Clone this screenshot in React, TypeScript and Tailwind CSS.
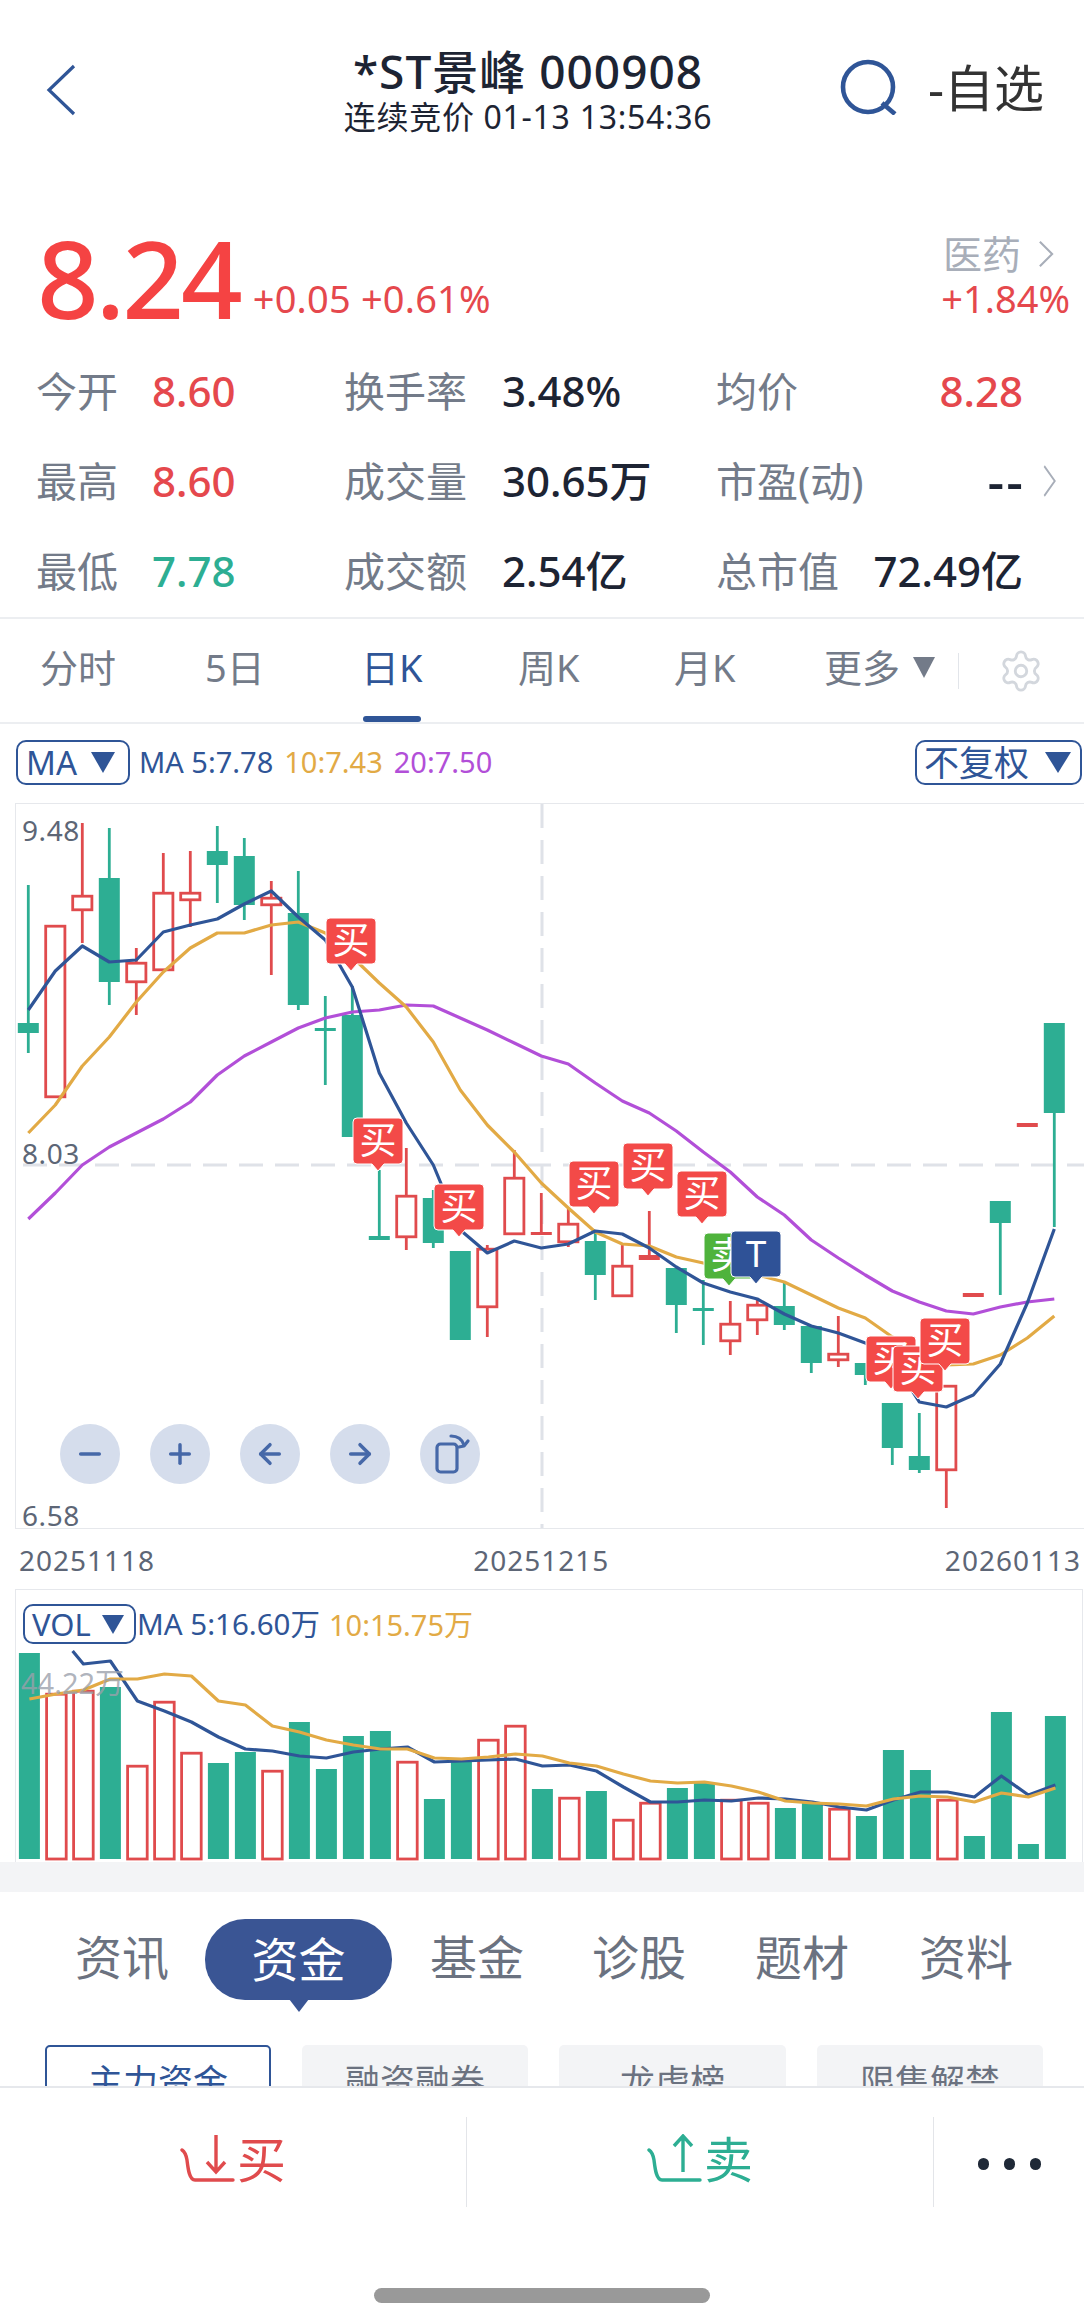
import { ArrowLeft, ArrowRight, Minus, Plus, Settings } from 'lucide-react';

type Candle = [up: boolean, wickTop: number, wickBottom: number, bodyTop: number, bodyBottom: number];

// page y coordinates, the chart svg uses a viewBox in page pixels
const candles: Candle[] = [
  [false, 885, 1053, 1023, 1033],
  [true, 925, 1098, 925, 1098],
  [true, 823, 943, 895, 911],
  [false, 828, 1005, 878, 982],
  [true, 948, 1015, 962, 983],
  [true, 853, 971, 892, 971],
  [true, 851, 927, 892, 901],
  [false, 826, 903, 851, 865],
  [false, 838, 920, 856, 905],
  [true, 881, 975, 897, 906],
  [false, 871, 1010, 913, 1005],
  [false, 996, 1085, 1028, 1031],
  [false, 986, 1137, 1015, 1137],
  [false, 1170, 1240, 1236, 1240],
  [true, 1148, 1250, 1195, 1238],
  [false, 1190, 1248, 1198, 1243],
  [false, 1251, 1340, 1251, 1340],
  [true, 1245, 1337, 1248, 1308],
  [true, 1150, 1235, 1177, 1235],
  [true, 1193, 1235, 1232, 1235],
  [true, 1209, 1247, 1223, 1243],
  [false, 1230, 1300, 1241, 1275],
  [true, 1245, 1297, 1265, 1297],
  [true, 1211, 1260, 1255, 1260],
  [false, 1268, 1333, 1268, 1305],
  [false, 1280, 1345, 1308, 1311],
  [true, 1301, 1355, 1323, 1342],
  [true, 1300, 1335, 1304, 1321],
  [false, 1283, 1330, 1306, 1325],
  [false, 1326, 1373, 1326, 1363],
  [true, 1316, 1367, 1353, 1361],
  [false, 1363, 1385, 1363, 1375],
  [false, 1403, 1465, 1403, 1448],
  [false, 1413, 1473, 1456, 1470],
  [true, 1385, 1508, 1385, 1471],
  [true, 1293, 1297, 1293, 1297],
  [false, 1201, 1295, 1201, 1223],
  [true, 1123, 1127, 1123, 1127],
  [false, 1023, 1227, 1023, 1113],
];

const ma5 = [1010, 971, 946, 962, 960, 932, 925, 919, 904, 891, 917, 940, 987, 1073, 1123, 1165, 1230, 1253, 1241, 1248, 1244, 1231, 1234, 1248, 1267, 1283, 1292, 1299, 1314, 1326, 1333, 1343, 1360, 1402, 1407, 1395, 1364, 1303, 1229];
const ma10 = [1133, 1105, 1066, 1037, 1002, 972, 948, 933, 933, 925, 922, 933, 957, 983, 1007, 1042, 1090, 1125, 1152, 1183, 1208, 1232, 1244, 1246, 1257, 1263, 1272, 1275, 1282, 1295, 1308, 1318, 1337, 1353, 1365, 1364, 1355, 1338, 1316];
const ma20 = [1219, 1193, 1165, 1147, 1133, 1119, 1102, 1075, 1056, 1042, 1028, 1018, 1012, 1010, 1005, 1006, 1018, 1030, 1043, 1056, 1064, 1083, 1101, 1113, 1131, 1152, 1172, 1197, 1215, 1240, 1258, 1275, 1291, 1302, 1311, 1314, 1307, 1302, 1299];

const flags = [
  { x: 326, y: 918, text: '买', color: '#f34a48' },
  { x: 353, y: 1118, text: '买', color: '#f34a48' },
  { x: 434, y: 1184, text: '买', color: '#f34a48' },
  { x: 569, y: 1161, text: '买', color: '#f34a48' },
  { x: 623, y: 1143, text: '买', color: '#f34a48' },
  { x: 677, y: 1171, text: '买', color: '#f34a48' },
  { x: 704, y: 1233, text: '卖', color: '#4fb33c' },
  { x: 731, y: 1231, text: 'T', color: '#2f5297' },
  { x: 866, y: 1336, text: '买', color: '#f34a48' },
  { x: 893, y: 1346, text: '买', color: '#f34a48' },
  { x: 920, y: 1318, text: '买', color: '#f34a48' },
];

// [up, top]
const volumes: [boolean, number][] = [
  [false, 1653], [true, 1693], [true, 1690], [false, 1687], [true, 1765], [true, 1701], [true, 1752], [false, 1763],
  [false, 1752], [true, 1770], [false, 1722], [false, 1769], [false, 1736], [false, 1731], [true, 1761], [false, 1799],
  [false, 1760], [true, 1739], [true, 1725], [false, 1789], [true, 1797], [false, 1791], [true, 1819], [true, 1802],
  [false, 1788], [false, 1783], [true, 1799], [true, 1802], [false, 1808], [false, 1803], [true, 1808], [false, 1816],
  [false, 1750], [false, 1770], [true, 1799], [false, 1836], [false, 1712], [false, 1844], [false, 1716],
];

const volMa5 = [1664, 1661, 1701, 1711, 1722, 1737, 1749, 1751, 1756, 1758, 1752, 1749, 1747, 1762, 1761, 1760, 1759, 1766, 1765, 1771, 1787, 1802, 1802, 1800, 1801, 1798, 1799, 1802, 1807, 1810, 1800, 1792, 1792, 1797, 1776, 1795, 1785];
const volMa10 = [1699, 1694, 1690, 1679, 1679, 1674, 1676, 1701, 1705, 1726, 1732, 1740, 1745, 1749, 1749, 1758, 1759, 1757, 1754, 1756, 1763, 1766, 1774, 1781, 1783, 1782, 1786, 1792, 1801, 1803, 1804, 1806, 1799, 1796, 1797, 1802, 1793, 1797, 1788];

const GREEN = '#2dae93';
const RED = '#e04b4d';
const BLUE = '#2f5597';
const ORANGE = '#e2aa45';
const PURPLE = '#b24fd8';

const candleX = (i: number) => 28.3 + 27 * i;
const volX = (i: number) => 29.4 + 27 * i;

function toPoints(values: number[], getX: (i: number) => number, from = 0) {
  return values.map((y, i) => `${getX(i + from)},${y}`).join(' ');
}

function Caret({ color, className }: { color: string; className: string }) {
  return (
    <svg viewBox="0 0 24 24" className={className} preserveAspectRatio="none">
      <polygon points="0,0 24,0 12,24" fill={color} />
    </svg>
  );
}

function Stat({ label, value, valueClass, labelWidth }: { label: string; value: string; valueClass: string; labelWidth: string }) {
  return (
    <div className="flex items-center">
      <span className={`${labelWidth} text-[41px] leading-none text-[#737b89]`}>{label}</span>
      <span className={`text-[42px] leading-none font-medium ${valueClass}`}>{value}</span>
    </div>
  );
}

function KlineChart() {
  return (
    <div className="relative ml-[15px] h-[726px] border border-r-0 border-[#e6e8ec]">
      <svg viewBox="15 803 1069 726" className="absolute -left-px -top-px h-[726px] w-[1069px]">
        <line x1="23" y1="1165" x2="1084" y2="1165" stroke="#dfe2e8" strokeWidth="3" strokeDasharray="24 12" />
        <line x1="542" y1="804" x2="542" y2="1528" stroke="#dfe2e8" strokeWidth="3" strokeDasharray="24 12" />
        {candles.map(([up, wickTop, wickBottom, bodyTop, bodyBottom], i) => {
          const x = candleX(i);
          const color = up ? RED : GREEN;
          const thin = bodyBottom - bodyTop < 7;
          return (
            <g key={i}>
              <line x1={x} y1={wickTop} x2={x} y2={wickBottom} stroke={color} strokeWidth="2.8" />
              {up && !thin ? (
                <rect x={x - 9.6} y={bodyTop + 1.2} width="19.2" height={bodyBottom - bodyTop - 2.4} fill="#fff" stroke={color} strokeWidth="2.8" />
              ) : (
                <rect x={x - 10.5} y={bodyTop} width="21" height={bodyBottom - bodyTop} fill={color} />
              )}
            </g>
          );
        })}
        <polyline points={toPoints(ma20, candleX)} fill="none" stroke={PURPLE} strokeWidth="3.2" strokeLinejoin="round" />
        <polyline points={toPoints(ma10, candleX)} fill="none" stroke={ORANGE} strokeWidth="3.2" strokeLinejoin="round" />
        <polyline points={toPoints(ma5, candleX)} fill="none" stroke={BLUE} strokeWidth="3.2" strokeLinejoin="round" />
        {flags.map((flag) => (
          <g key={`${flag.x}-${flag.y}`}>
            <path
              d={`M${flag.x + 4} ${flag.y}h42a4 4 0 0 1 4 4v38a4 4 0 0 1-4 4h-15l-6 7-6-7h-15a4 4 0 0 1-4-4v-38a4 4 0 0 1 4-4z`}
              fill={flag.color}
              stroke="#fff"
              strokeWidth="1"
            />
            <text x={flag.x + 25} y={flag.y + 36} textAnchor="middle" fill="#fff" fontSize="37">
              {flag.text}
            </text>
          </g>
        ))}
      </svg>
      <span className="absolute left-[6px] top-[10px] text-[28px] leading-[32px] tracking-[0.6px] text-[#5d6676]">9.48</span>
      <span className="absolute left-[6px] top-[333px] text-[28px] leading-[32px] tracking-[0.6px] text-[#5d6676]">8.03</span>
      <span className="absolute left-[6px] top-[695px] text-[28px] leading-[32px] tracking-[0.6px] text-[#5d6676]">6.58</span>
      <div className="absolute left-[44px] top-[620px] flex gap-[30px] text-[#4668a8]">
        <div className="flex h-[60px] w-[60px] items-center justify-center rounded-full bg-[#d5ddec]">
          <Minus size={32} strokeWidth={2.6} />
        </div>
        <div className="flex h-[60px] w-[60px] items-center justify-center rounded-full bg-[#d5ddec]">
          <Plus size={32} strokeWidth={2.6} />
        </div>
        <div className="flex h-[60px] w-[60px] items-center justify-center rounded-full bg-[#d5ddec]">
          <ArrowLeft size={32} strokeWidth={2.6} />
        </div>
        <div className="flex h-[60px] w-[60px] items-center justify-center rounded-full bg-[#d5ddec]">
          <ArrowRight size={32} strokeWidth={2.6} />
        </div>
        <div className="flex h-[60px] w-[60px] items-center justify-center rounded-full bg-[#d5ddec]">
          <svg viewBox="0 0 60 60" className="h-[60px] w-[60px]" fill="none" stroke="currentColor" strokeWidth="3.2">
            <rect x="17" y="20" width="20" height="28" rx="3.5" />
            <path d="M31 12c6 0 11 3 13 9" strokeLinecap="round" />
            <path d="M39 23l5 -1 4 -5" strokeLinecap="round" strokeLinejoin="round" />
          </svg>
        </div>
      </div>
    </div>
  );
}

function VolumeChart() {
  return (
    <div className="relative ml-[15px] mr-[1px] h-[273px] border-x border-t border-[#e6e8ec]">
      <svg viewBox="15 1589 1068 273" className="absolute -left-px -top-px h-[273px] w-[1068px]">
        {volumes.map(([up, top], i) => {
          const x = volX(i);
          return up ? (
            <rect key={i} x={x - 9.8} y={top + 1.2} width="19.6" height={1859 - top - 1.2} fill="#fff" stroke={RED} strokeWidth="2.8" />
          ) : (
            <rect key={i} x={x - 10.5} y={top} width="21" height={1859 - top} fill={GREEN} />
          );
        })}
        <polyline points={`72.6,1651 ${toPoints(volMa5, volX, 2)}`} fill="none" stroke={BLUE} strokeWidth="3.2" strokeLinejoin="round" />
        <polyline points={toPoints(volMa10, volX)} fill="none" stroke={ORANGE} strokeWidth="3.2" strokeLinejoin="round" />
      </svg>
      <span className="absolute left-[5px] top-[77px] text-[29px] leading-[32px] text-[#9aa0ab]/80">44.22万</span>
      <div className="absolute left-[7px] top-[14px] flex items-center">
        <div className="flex h-[40px] w-[113px] items-center rounded-[10px] border-2 border-[#2f5597] pl-[7px] text-[31px] leading-none text-[#2f5597]">
          VOL
          <Caret color={BLUE} className="ml-[11px] h-[19px] w-[22px]" />
        </div>
        <span className="ml-[1px] text-[29.5px] leading-none text-[#2f5597]">MA 5:16.60万</span>
        <span className="ml-[9px] text-[29px] leading-none text-[#e2aa45]">10:15.75万</span>
      </div>
    </div>
  );
}

export default function App() {
  return (
    <div className="relative flex h-[2321px] w-[1084px] flex-col overflow-hidden bg-white font-['Noto_Sans','Noto_Sans_CJK_SC',sans-serif]">
      <header className="flex h-[140px] shrink-0">
        <svg viewBox="0 0 30 52" className="ml-[46px] mt-[64px] h-[52px] w-[30px]" fill="none" stroke="#2f5597" strokeWidth="3.2">
          <path d="M28 2 3 26l25 24" />
        </svg>
        <div className="ml-[268px] w-[368px] pt-[45px] text-center">
          <div className="-mx-[10px] text-[46px] leading-[52px] font-medium tracking-[1px] whitespace-nowrap text-[#1d2433]">*ST景峰 000908</div>
          <div className="-mx-[10px] text-[32px] leading-[40px] tracking-[0.7px] whitespace-nowrap text-[#1d2433]">连续竞价 01-13 13:54:36</div>
        </div>
        <svg viewBox="0 0 58 56" className="ml-[128px] mt-[59px] h-[56px] w-[58px]" fill="none" stroke="#2f5597" strokeWidth="4.6">
          <circle cx="28" cy="28" r="25" />
          <path d="M42 44l13 11" />
        </svg>
        <div className="ml-[30px] mt-[63px] h-[50px] text-[50px] leading-[50px] whitespace-nowrap text-[#333]">-自选</div>
      </header>

      <section className="relative flex h-[207px] shrink-0 pl-[37px]">
        <div className="mt-[78px] text-[108px] leading-[120px] font-medium tracking-[-3px] text-[#f54343]">8.24</div>
        <div className="ml-[13px] mt-[133px] text-[38px] leading-[50px] tracking-[0.2px] whitespace-nowrap text-[#e5484d]">+0.05 +0.61%</div>
        <div className="ml-auto mr-[14px] mt-[89px] flex flex-col items-end">
          <div className="flex items-center text-[39px] leading-[50px] text-[#a8aeb9]">
            医药
            <svg viewBox="0 0 20 32" className="ml-[16px] mr-[15px] h-[28px] w-[18px]" fill="none" stroke="#a8aeb9" strokeWidth="2.4">
              <path d="M3 2l14 14-14 14" />
            </svg>
          </div>
          <div className="-mt-[6px] text-[38px] leading-[50px] whitespace-nowrap text-[#e5484d]">+1.84%</div>
        </div>
      </section>

      <section className="flex h-[270px] shrink-0 flex-col pl-[36px]">
        <div className="flex h-[90px] -translate-y-[1px] items-center">
          <div className="w-[308px]">
            <Stat label="今开" value="8.60" valueClass="text-[#e5484d]" labelWidth="w-[116px]" />
          </div>
          <div className="w-[372px]">
            <Stat label="换手率" value="3.48%" valueClass="text-[#1d2433]" labelWidth="w-[158px]" />
          </div>
          <div className="flex w-[307px] items-center justify-between">
            <span className="text-[41px] leading-none text-[#737b89]">均价</span>
            <span className="text-[42px] leading-none font-medium text-[#e5484d]">8.28</span>
          </div>
        </div>
        <div className="flex h-[90px] -translate-y-[1px] items-center">
          <div className="w-[308px]">
            <Stat label="最高" value="8.60" valueClass="text-[#e5484d]" labelWidth="w-[116px]" />
          </div>
          <div className="w-[372px]">
            <Stat label="成交量" value="30.65万" valueClass="text-[#1d2433]" labelWidth="w-[158px]" />
          </div>
          <div className="flex w-[307px] items-center justify-between">
            <span className="text-[41px] leading-none text-[#737b89]">市盈(动)</span>
            <span className="-mr-[2px] text-[52px] leading-none font-medium tracking-[2px] text-[#1d2433]">--</span>
          </div>
          <svg viewBox="0 0 20 32" className="ml-[19px] h-[34px] w-[15px]" fill="none" stroke="#a8aeb9" strokeWidth="2.2" preserveAspectRatio="none">
            <path d="M3 2l14 14-14 14" />
          </svg>
        </div>
        <div className="flex h-[90px] -translate-y-[1px] items-center">
          <div className="w-[308px]">
            <Stat label="最低" value="7.78" valueClass="text-[#2dae93]" labelWidth="w-[116px]" />
          </div>
          <div className="w-[372px]">
            <Stat label="成交额" value="2.54亿" valueClass="text-[#1d2433]" labelWidth="w-[158px]" />
          </div>
          <div className="flex w-[307px] items-center justify-between">
            <span className="text-[41px] leading-none text-[#737b89]">总市值</span>
            <span className="text-[42px] leading-none font-medium text-[#1d2433]">72.49亿</span>
          </div>
        </div>
      </section>

      <nav className="relative flex h-[107px] shrink-0 items-center border-y-2 border-[#eceef1] pb-[8px] text-[38px] leading-none text-[#737b89]">
        <span className="absolute left-[40px]">分时</span>
        <span className="absolute left-[205px]">5日</span>
        <span className="absolute left-[361px] text-[#2f5597]">日K</span>
        <span className="absolute left-[518px]">周K</span>
        <span className="absolute left-[674px]">月K</span>
        <span className="absolute left-[824px]">更多</span>
        <Caret color="#737b89" className="absolute left-[913px] top-[38px] h-[21px] w-[22px]" />
        <div className="absolute left-[958px] top-[34px] h-[36px] w-px bg-[#e2e5ea]" />
        <Settings size={46} strokeWidth={1.5} className="absolute left-[998px] top-[29px] text-[#d3d7dd]" />
        <div className="absolute bottom-0 left-[363px] h-[6px] w-[58px] rounded-full bg-[#2f5597]" />
      </nav>

      <div className="flex h-[79px] shrink-0 items-start pl-[16px] pt-[16px]">
        <div className="flex h-[45px] w-[114px] items-center rounded-[10px] border-2 border-[#2f5597] pl-[8px] text-[33px] leading-none text-[#2f5597]">
          MA
          <Caret color={BLUE} className="ml-[14px] h-[21px] w-[24px]" />
        </div>
        <div className="ml-[9px] flex h-[45px] -translate-y-[1px] items-center gap-[11px] text-[29px] leading-none whitespace-nowrap">
          <span className="text-[#2f5597]">MA 5:7.78</span>
          <span className="text-[#e2aa45]">10:7.43</span>
          <span className="text-[#b24fd8]">20:7.50</span>
        </div>
        <div className="ml-auto mr-[2px] flex h-[45px] w-[167px] items-center rounded-[10px] border-2 border-[#2f5597] pl-[7px] text-[35px] leading-none text-[#2f5597]">
          不复权
          <Caret color={BLUE} className="ml-[16px] h-[21px] w-[26px]" />
        </div>
      </div>

      <KlineChart />

      <div className="flex h-[60px] shrink-0 pl-[19px] pr-[3px] pt-[15px] text-[28px] leading-[32px] tracking-[1px] text-[#5d6676]">
        <span>20251118</span>
        <span className="ml-[318px]">20251215</span>
        <span className="ml-auto">20260113</span>
      </div>

      <VolumeChart />

      <div className="h-[30px] shrink-0 bg-[#f3f4f6]" />

      <div className="relative h-[153px] shrink-0 text-[47px] leading-none text-[#6b7280]">
        <span className="absolute left-[75px] top-[42px]">资讯</span>
        <div className="absolute left-[205px] top-[27px] flex h-[81px] w-[187px] items-center justify-center rounded-[40px] bg-[#3a5594] text-white">
          资金
          <div className="absolute -bottom-[12px] left-[84px] h-0 w-0 border-x-[10px] border-t-[13px] border-x-transparent border-t-[#3a5594]" />
        </div>
        <span className="absolute left-[430px] top-[42px]">基金</span>
        <span className="absolute left-[592px] top-[42px]">诊股</span>
        <span className="absolute left-[755px] top-[42px]">题材</span>
        <span className="absolute left-[919px] top-[42px]">资料</span>
      </div>

      <div className="flex h-[41px] shrink-0 gap-[31px] overflow-hidden pl-[45px] text-[35px] leading-none">
        <div className="flex h-[72px] w-[226px] shrink-0 items-center justify-center rounded-[5px] border-2 border-[#2f5597] text-[#2f5597]">主力资金</div>
        <div className="flex h-[72px] w-[226px] shrink-0 items-center justify-center rounded-[5px] bg-[#f3f4f6] text-[#6b7280]">融资融券</div>
        <div className="flex h-[72px] w-[227px] shrink-0 items-center justify-center rounded-[5px] bg-[#f3f4f6] text-[#6b7280]">龙虎榜</div>
        <div className="flex h-[72px] w-[226px] shrink-0 items-center justify-center rounded-[5px] bg-[#f3f4f6] text-[#6b7280]">限售解禁</div>
      </div>

      <footer className="relative flex-1 border-t-2 border-[#e6e8ec] bg-white">
        <div className="mt-[29px] flex h-[90px]">
          <div className="flex w-[467px] items-start justify-center border-r border-[#e3e5e9] pt-[17px]">
            <svg viewBox="0 0 60 50" className="mr-[2px] h-[50px] w-[60px]" fill="none" stroke="#e04b4d" strokeWidth="3.4">
              <path d="M2 16c3 2 4 4 5 10 1 8 2 20 8 20h38" strokeLinecap="round" />
              <path d="M36 1v36M27 28l9 10 9-10" />
            </svg>
            <span className="-ml-[5px] text-[49px] leading-[50px] text-[#e04b4d]">买</span>
          </div>
          <div className="flex w-[467px] items-start justify-center border-r border-[#e3e5e9] pt-[17px]">
            <svg viewBox="0 0 60 50" className="mr-[2px] h-[50px] w-[60px]" fill="none" stroke="#2dae93" strokeWidth="3.4">
              <path d="M2 16c3 2 4 4 5 10 1 8 2 20 8 20h38" strokeLinecap="round" />
              <path d="M36 38V2M27 12l9-10 9 10" />
            </svg>
            <span className="-ml-[5px] text-[49px] leading-[50px] text-[#2dae93]">卖</span>
          </div>
          <div className="flex flex-1 items-center justify-center gap-[15px] pt-[4px]">
            <div className="h-[12px] w-[11px] rounded-full bg-[#1f2937]" />
            <div className="h-[12px] w-[11px] rounded-full bg-[#1f2937]" />
            <div className="h-[12px] w-[11px] rounded-full bg-[#1f2937]" />
          </div>
        </div>
        <div className="mx-auto mt-[81px] h-[15px] w-[336px] rounded-[8px] bg-[#999]" />
      </footer>
    </div>
  );
}
